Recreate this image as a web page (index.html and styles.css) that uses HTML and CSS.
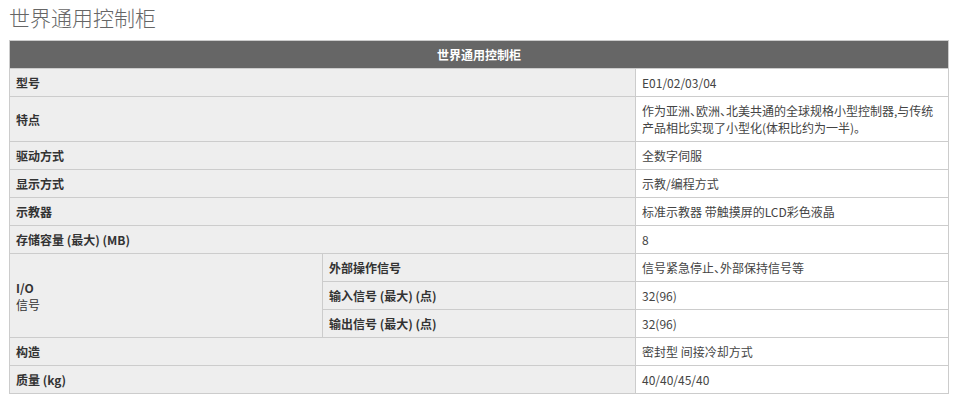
FILE: index.html
```html
<!DOCTYPE html>
<html lang="zh">
<head>
<meta charset="utf-8">
<link rel="stylesheet" href="styles.css">
</head>
<body>
<div class="page">
  <h1 class="title">世界通用控制柜</h1>
  <table class="spec">
    <colgroup><col class="c1"><col class="c2"><col class="c3"></colgroup>
    <thead>
      <tr><th colspan="3" class="head">世界通用控制柜</th></tr>
    </thead>
    <tbody>
      <tr><td colspan="2" class="label">型号</td><td class="val">E01/02/03/04</td></tr>
      <tr><td colspan="2" class="label">特点</td><td class="val">作为亚洲、欧洲、北美共通的全球规格小型控制器,与传统产品相比实现了小型化(体积比约为一半)。</td></tr>
      <tr><td colspan="2" class="label">驱动方式</td><td class="val">全数字伺服</td></tr>
      <tr><td colspan="2" class="label">显示方式</td><td class="val">示教/编程方式</td></tr>
      <tr><td colspan="2" class="label">示教器</td><td class="val">标准示教器 带触摸屏的LCD彩色液晶</td></tr>
      <tr><td colspan="2" class="label">存储容量 (最大) (MB)</td><td class="val">8</td></tr>
      <tr><td rowspan="3" class="label">I/O<br><span class="normal">信号</span></td><td class="label">外部操作信号</td><td class="val">信号紧急停止、外部保持信号等</td></tr>
      <tr><td class="label">输入信号 (最大) (点)</td><td class="val">32(96)</td></tr>
      <tr><td class="label">输出信号 (最大) (点)</td><td class="val">32(96)</td></tr>
      <tr><td colspan="2" class="label">构造</td><td class="val">密封型 间接冷却方式</td></tr>
      <tr><td colspan="2" class="label">质量 (kg)</td><td class="val">40/40/45/40</td></tr>
    </tbody>
  </table>
</div>
</body>
</html>
```
FILE: styles.css
```css
html, body {
  margin: 0;
  padding: 0;
  background: #fff;
}
.page {
  padding: 0 16px 0 9px;
  font-family: "Noto Sans CJK SC", "Noto Sans", sans-serif;
  color: #333;
}
.title {
  margin: 0;
  padding-top: 3px;
  height: 37px;
  font-size: 21px;
  line-height: 28px;
  font-weight: 300;
  color: #666;
}
.spec {
  width: 939px;
  border-collapse: collapse;
  table-layout: fixed;
  font-size: 12px;
}
.c1, .c2, .c3 { width: 313px; }
.spec th, .spec td {
  border: 1px solid #ccc;
  padding: 5px 6px;
  line-height: 17px;
  text-align: left;
  vertical-align: middle;
}
.spec .head {
  background: #666;
  color: #fff;
  text-align: center;
  font-weight: bold;
}
.label {
  background: #eee;
  font-weight: bold;
  color: #333;
}
.normal { font-weight: normal; }
.val {
  background: #fff;
  color: #444;
  font-feature-settings: "halt";
}
```
